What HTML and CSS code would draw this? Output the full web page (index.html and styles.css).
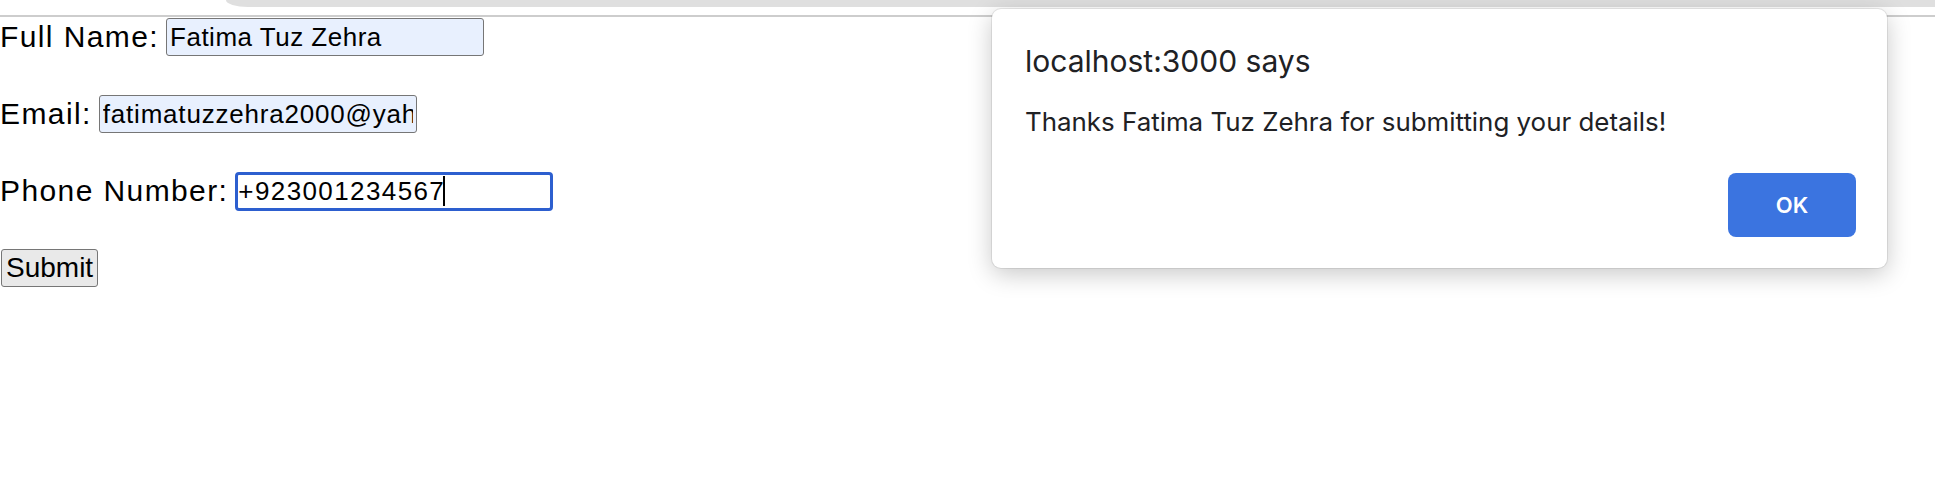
FILE: index.html
```html
<!DOCTYPE html>
<html lang="en">
<head>
<meta charset="utf-8">
<title>Form</title>
<link rel="stylesheet" href="styles.css">
</head>
<body>
<div class="chrome">
  <div class="tabstrip"></div>
</div>
<form class="form">
  <div class="row">
    <label class="label" for="name">Full Name:</label>
    <input class="field autofill" id="name" type="text" value="Fatima Tuz Zehra">
  </div>
  <div class="row">
    <label class="label" for="email">Email:</label>
    <input class="field autofill email" id="email" type="text" value="fatimatuzzehra2000@yahoo.com">
  </div>
  <div class="row">
    <label class="label" for="phone">Phone Number:</label>
    <span class="field-wrap">
      <input class="field focused" id="phone" type="text" value="+923001234567">
      <span class="caret"></span>
    </span>
  </div>
  <div class="row">
    <button class="submit" type="button">Submit</button>
  </div>
</form>

<div class="dialog" role="alertdialog">
  <div class="dialog-title">localhost:3000 says</div>
  <div class="dialog-msg">Thanks Fatima Tuz Zehra for submitting your details!</div>
  <div class="dialog-actions">
    <button class="ok" type="button">OK</button>
  </div>
</div>
</body>
</html>
```
FILE: styles.css
```css
html, body {
  margin: 0;
  padding: 0;
  background: #ffffff;
}

body {
  font-family: "Liberation Sans", Arial, sans-serif;
  color: #000;
  width: 1935px;
  height: 487px;
  overflow: hidden;
  position: relative;
}

.chrome {
  height: 15px;
  border-bottom: 2px solid #cdcdcd;
}

.tabstrip {
  margin-left: 226px;
  height: 7px;
  background: #dfdfdf;
  border-bottom-left-radius: 22px 7px;
}

.form {
  display: flex;
  flex-direction: column;
  gap: 39px;
  padding-top: 1px;
}

.row {
  display: flex;
  align-items: center;
  height: 38px;
}

.label {
  font-size: 30px;
  line-height: 34px;
  letter-spacing: 1.4px;
  margin-right: 7px;
}

.field {
  box-sizing: border-box;
  width: 318px;
  height: 38px;
  margin: 0;
  padding: 0 3px;
  border: 1px solid #767676;
  border-radius: 3px;
  font-family: "Liberation Sans", Arial, sans-serif;
  font-size: 26px;
  letter-spacing: 0.5px;
  color: #000;
  background: #fff;
  outline: none;
}

.autofill {
  background: #e8f0fe;
}

.email {
  letter-spacing: 0.8px;
}

.field-wrap {
  position: relative;
  display: inline-block;
  height: 39px;
}

.focused {
  height: 39px;
  border: 3px solid #2d5fcf;
  border-radius: 4px;
  padding: 0;
  letter-spacing: 1.4px;
}

.caret {
  position: absolute;
  left: 208px;
  top: 4px;
  width: 2px;
  height: 30px;
  background: #000;
}

.submit {
  box-sizing: border-box;
  height: 38px;
  margin: 0 0 0 1px;
  padding: 0 4px;
  border: 1px solid #767676;
  border-radius: 3px;
  background: #e9e9e9;
  font-family: "Liberation Sans", Arial, sans-serif;
  font-size: 28px;
  color: #000;
}

.dialog {
  position: absolute;
  left: 992px;
  top: 9px;
  width: 895px;
  height: 259px;
  box-sizing: border-box;
  padding: 33px 31px 31px 33px;
  background: #fff;
  border-radius: 9px;
  box-shadow: 0 0 0 1px rgba(0, 0, 0, 0.08), 0 6px 24px rgba(0, 0, 0, 0.22);
  font-family: "Inter", "Liberation Sans", sans-serif;
  color: #202124;
  display: flex;
  flex-direction: column;
}

.dialog-title {
  font-size: 30px;
  line-height: 38px;
}

.dialog-msg {
  margin-top: 25px;
  font-size: 25.9px;
  line-height: 34px;
}

.dialog-actions {
  margin-top: auto;
  display: flex;
  justify-content: flex-end;
}

.ok {
  width: 128px;
  height: 64px;
  border: none;
  border-radius: 8px;
  background: #3b74e0;
  color: #fff;
  font-family: "Inter", "Liberation Sans", sans-serif;
  font-size: 22px;
  font-weight: 600;
}
```
